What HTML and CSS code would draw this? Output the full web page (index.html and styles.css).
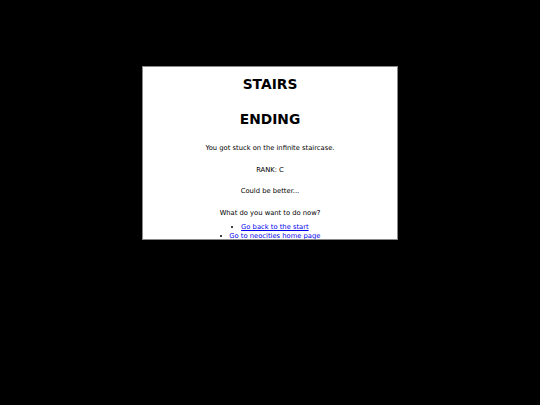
FILE: index.html
```html
<!DOCTYPE html>
<html>
<head>
<meta charset="utf-8">
<link rel="stylesheet" href="styles.css">
</head>
<body>
<div class="box">
  <h1 class="title">STAIRS</h1>
  <h1 class="title second">ENDING</h1>
  <p class="line first">You got stuck on the infinite staircase.</p>
  <p class="line">RANK: C</p>
  <p class="line">Could be better...</p>
  <p class="line">What do you want to do now?</p>
  <ul class="links">
    <li><a href="#">Go back to the start</a></li>
    <li><a href="#">Go to neocities home page</a></li>
  </ul>
</div>
</body>
</html>
```
FILE: styles.css
```css
html, body {
  margin: 0;
  padding: 0;
  background: #000;
}
body {
  width: 540px;
  height: 405px;
  font-family: "DejaVu Sans", Verdana, sans-serif;
}
.box {
  width: 256px;
  height: 174px;
  margin: 66px auto 0;
  background: #fff;
  border: 1px solid #8a8a8a;
  overflow: hidden;
  text-align: center;
  color: #000;
  box-sizing: border-box;
  padding-top: 9px;
}
.title {
  font-size: 13.8px;
  line-height: 16px;
  margin: 0;
  font-weight: bold;
}
.second {
  margin-top: 19px;
}
.line {
  font-size: 6.75px;
  line-height: 10px;
  margin: 11.5px 0 0;
}
.first {
  margin-top: 16px;
}
.links {
  list-style: disc inside;
  padding: 0;
  margin: 5.5px 0 0;
  font-size: 6.75px;
  line-height: 8.5px;
}
.links a {
  color: #0000ee;
}
```
